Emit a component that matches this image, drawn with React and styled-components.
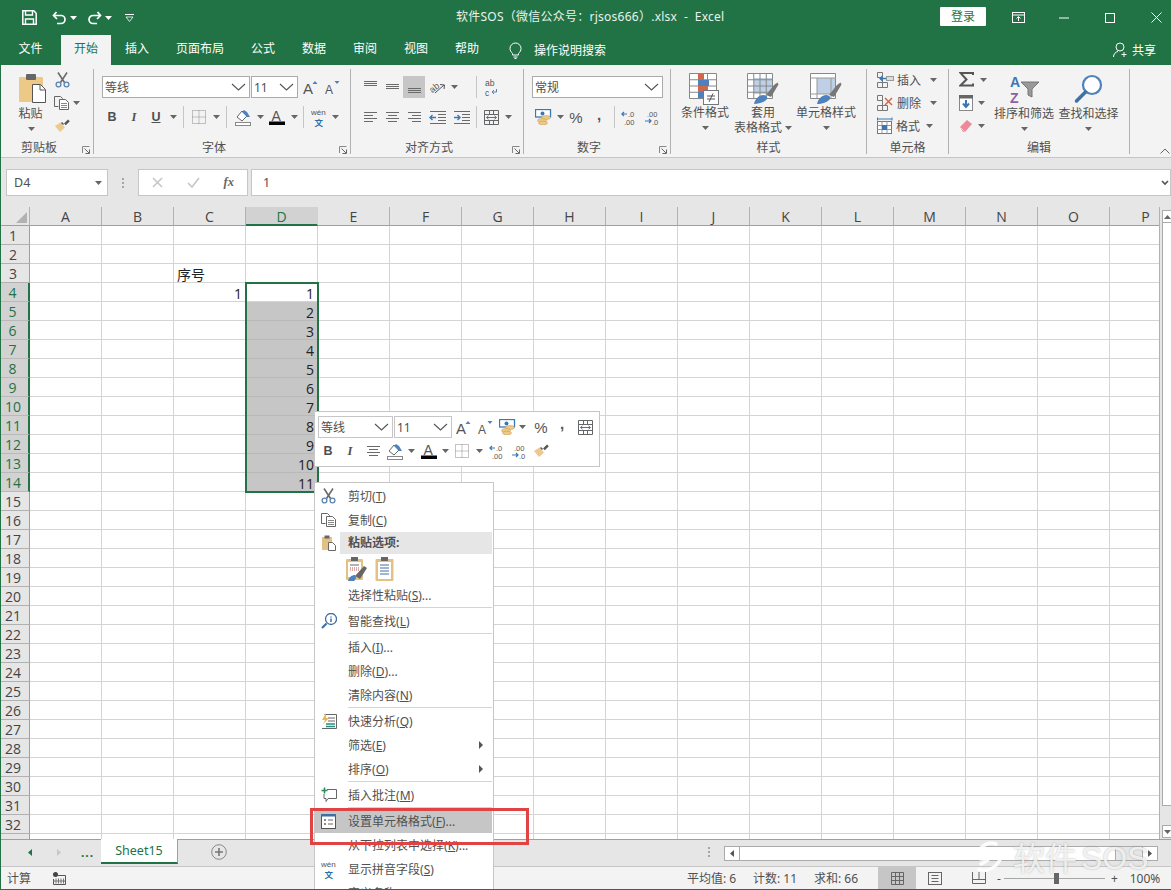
import React from 'react'
import styled, { createGlobalStyle } from 'styled-components'

const CJK = '"Noto Sans", "Noto Sans CJK SC", sans-serif'
const GREEN = '#217346'

const Global = createGlobalStyle`
  html, body { margin: 0; padding: 0; height: 100%; overflow: hidden; }
  body { font-family: ${CJK}; font-size: 12px; color: #505050; }
  * { box-sizing: border-box; }
`

const Window = styled.div`
  position: relative;
  width: 1171px;
  height: 890px;
  overflow: hidden;
  display: flex;
  flex-direction: column;
  background: #e6e6e6;
  border-left: 1px solid ${GREEN};
  border-bottom: 1px solid ${GREEN};
`

/* title bar */
const TitleBar = styled.div`
  height: 35px;
  margin-left: -1px;
  background: ${GREEN};
  display: flex;
  align-items: center;
  color: #fff;
  flex: none;
`
const Quick = styled.div`
  display: flex;
  align-items: center;
  width: 456px;
  flex: none;
  padding-left: 22px;
`
const QuickItem = styled.span`
  display: flex;
  align-items: center;
  width: ${p => p.$w}px;
`
const WinTitle = styled.div`
  width: 484px;
  flex: none;
  font-size: 12px;
  letter-spacing: .25px;
  padding-bottom: 3px;
  white-space: nowrap;
  color: #e9f2ed;
`
const Login = styled.div`
  width: 46px;
  height: 19px;
  flex: none;
  line-height: 19px;
  margin-top: -2px;
  background: #fff;
  border-radius: 1px;
  color: ${GREEN};
  text-align: center;
  font-size: 12px;
`
const WinButtons = styled.div`
  display: flex;
  align-items: center;
  flex: none;
  margin-left: 9px;
`
const WinBtn = styled.span`
  width: 46px;
  display: flex;
  justify-content: center;
  align-items: center;
`

/* tabs */
const TabBar = styled.div`
  height: 30px;
  margin-left: -1px;
  background: ${GREEN};
  display: flex;
  align-items: flex-end;
  flex: none;
  color: #fff;
`
const Tab = styled.div`
  width: ${p => p.$w}px;
  height: 30px;
  line-height: 27px;
  text-align: center;
  font-size: 12px;
  background: ${p => (p.$active ? '#f3f3f3' : 'transparent')};
  color: ${p => (p.$active ? GREEN : '#fff')};
`
const SearchTab = styled.div`
  display: flex;
  align-items: center;
  height: 30px;
  gap: 12px;
  margin-left: 16px;
`
const Share = styled.div`
  display: flex;
  align-items: center;
  height: 30px;
  gap: 4px;
  margin-left: auto;
  padding-right: 15px;
`

/* ribbon */
const Ribbon = styled.div`
  height: 93px;
  background: #f3f3f3;
  display: flex;
  flex: none;
  border-bottom: 1px solid #c6c6c6;
  padding-top: 4px;
  position: relative;
`
const Group = styled.section`
  width: ${p => p.$w}px;
  height: 85px;
  flex: none;
  display: flex;
  flex-direction: column;
  border-right: 1px solid #b1b1b1;
`
const GroupBody = styled.div`
  flex: 1;
  min-height: 0;
  display: flex;
  padding-left: ${p => p.$pl || 0}px;
`
const GroupRows = styled.div`
  flex: 1;
  min-height: 0;
  display: flex;
  flex-direction: column;
  gap: 8px;
  padding: 7px 0 0 ${p => p.$pl || 8}px;
`
const GroupFoot = styled.div`
  height: 14px;
  flex: none;
  display: flex;
  align-items: flex-end;
  font-size: 12px;
  color: #505050;
  line-height: 14px;
  margin-bottom: -1px;
`
const FootLabel = styled.span`
  flex: 1;
  text-align: center;
`
const Launcher = styled.span`
  width: 16px;
  flex: none;
  display: flex;
  justify-content: flex-end;
  padding: 0 3px 1px 0;
`
const Collapse = styled.div`
  position: absolute;
  right: 1px;
  bottom: 3px;
`
const Stack = styled.div`
  display: flex;
  flex-direction: column;
  width: ${p => (p.$w ? `${p.$w}px` : 'auto')};
  margin-top: ${p => p.$mt || 0}px;
  margin-left: ${p => p.$ml || 0}px;
  flex: none;
`
const Row = styled.div`
  display: flex;
  align-items: center;
  height: ${p => p.$h || 22}px;
  margin-left: ${p => p.$ml || 0}px;
  margin-top: ${p => p.$mt || 0}px;
`
const Tool = styled.span`
  width: ${p => p.$w || 22}px;
  height: ${p => p.$h || 22}px;
  flex: none;
  display: flex;
  align-items: center;
  justify-content: center;
  background: ${p => (p.$on ? '#c6c6c6' : 'transparent')};
`
const Sep = styled.span`
  width: 1px;
  height: 22px;
  flex: none;
  background: #c6c6c6;
  margin-left: ${p => p.$ml ?? 4}px;
  margin-right: ${p => p.$mr ?? 4}px;
`
const Combo = styled.div`
  width: ${p => p.$w}px;
  height: 22px;
  flex: none;
  background: #fff;
  border: 1px solid ${p => (p.$light ? '#c6c6c6' : '#ababab')};
  display: flex;
  align-items: center;
  justify-content: space-between;
  padding: 0 3px 0 2px;
  font-size: 12px;
  color: #505050;
  margin-right: 1px;
`
const BoldLetter = styled.span`
  font-family: ${p => (p.$i ? '"Liberation Serif", serif' : '"Liberation Sans", sans-serif')};
  font-weight: 700;
  font-size: 12.5px;
  color: #505050;
  font-style: ${p => (p.$i ? 'italic' : 'normal')};
  text-decoration: ${p => (p.$u ? 'underline' : 'none')};
`
const Glyph = styled.span`
  font-family: "Liberation Sans", sans-serif;
  font-size: 15px;
  line-height: 15px;
  font-weight: ${p => p.$b || 400};
  color: #555;
  margin-top: ${p => (p.$up ? -p.$up * 2 : 0)}px;
`
const BigBtn = styled.div`
  width: ${p => p.$w}px;
  flex: none;
  display: flex;
  flex-direction: column;
  align-items: center;
  font-size: 12px;
  line-height: 15px;
  color: #505050;
  padding-top: ${p => p.$pt ?? 4}px;
  white-space: nowrap;
`
const BigLabel = styled.div`
  margin-top: ${p => p.$mt ?? 0}px;
  margin-left: ${p => p.$ml ?? 0}px;
  text-align: center;
  height: 15px;
`
const CaretLine = styled.div`
  height: 15px;
  display: flex;
  align-items: center;
  justify-content: center;
  gap: 3px;
  margin-left: ${p => p.$ml ?? 0}px;
`
const CellRow = styled.div`
  display: flex;
  align-items: center;
  height: 23px;
  font-size: 12px;
  gap: ${p => p.$gap ?? 3}px;
`
const CellText = styled.span`
  width: ${p => p.$w}px;
`

/* formula bar */
const FormulaBar = styled.div`
  height: 49px;
  flex: none;
  display: flex;
  padding: 11px 0 11px 5px;
  background: #e6e6e6;
  align-items: stretch;
`
const FBox = styled.div`
  width: ${p => (p.$w ? `${p.$w}px` : 'auto')};
  flex: ${p => (p.$w ? 'none' : 1)};
  background: #fff;
  border: 1px solid #c6c6c6;
  display: flex;
  align-items: center;
  font-size: 12.5px;
  color: #505050;
  padding: 0 ${p => p.$pr || 6}px 0 ${p => p.$pl || 7}px;
  justify-content: ${p => p.$j || 'flex-start'};
  margin-right: ${p => p.$mr || 0}px;
`
const Fx = styled.span`
  font-family: "Liberation Serif", serif;
  font-style: italic;
  font-weight: 700;
  color: #666;
`
const Grip = styled.div`
  width: ${p => p.$w || 30}px;
  height: ${p => (p.$h ? `${p.$h}px` : 'auto')};
  margin-left: ${p => p.$ml || 0}px;
  flex: none;
  display: flex;
  flex-direction: column;
  align-items: center;
  justify-content: center;
  gap: 2px;
  span { width: 2px; height: 2px; background: #a6a6a6; }
`

/* sheet */
const SheetArea = styled.div`
  flex: none;
  height: 632px;
  display: flex;
  background: #e6e6e6;
`
const GridClip = styled.div`
  position: relative;
  width: 1159px;
  flex: none;
  overflow: hidden;
  background: #fff;
  border-right: 1px solid #b1b1b1;
`
const SheetGrid = styled.div`
  display: grid;
  grid-template-columns: 29px repeat(16, 72px);
  grid-auto-rows: 19px;
  width: 1181px;
  font-family: "Open Sans", "Noto Sans CJK SC", sans-serif;
`
const Corner = styled.div`
  height: 19px;
  background: #e6e6e6;
  border-right: 1px solid #b1b1b1;
  border-bottom: 1px solid #9f9f9f;
  display: flex;
  justify-content: flex-end;
  align-items: flex-end;
  padding: 0 2px 2px 0;
`
const ColHead = styled.div`
  height: 19px;
  background: ${p => (p.$on ? '#d2d2d2' : '#e6e6e6')};
  color: ${p => (p.$on ? GREEN : '#444')};
  border-right: 1px solid ${p => (p.$on ? '#d2d2d2' : '#b1b1b1')};
  border-bottom: ${p => (p.$on ? `2px solid ${GREEN}` : '1px solid #9f9f9f')};
  text-align: center;
  font-size: 14px;
  line-height: 20px;
`
const RowHead = styled.div`
  background: ${p => (p.$on ? '#d2d2d2' : '#e6e6e6')};
  color: ${p => (p.$on ? GREEN : '#444')};
  border-right: ${p => (p.$on ? `2px solid ${GREEN}` : '1px solid #9f9f9f')};
  border-bottom: 1px solid ${p => (p.$on ? '#b9b9b9' : '#b1b1b1')};
  text-align: center;
  font-size: 14px;
  line-height: 20px;
  padding-left: 4px;
  padding-right: 8px;
`
const Cell = styled.div`
  background: ${p => (p.$on ? '#c6c6c6' : '#fff')};
  border-right: 1px solid ${p => (p.$on ? '#c6c6c6' : '#d4d4d4')};
  border-bottom: 1px solid ${p => (p.$on ? '#b9b9b9' : '#d4d4d4')};
  color: #222;
  font-size: 14px;
  line-height: 21px;
  padding: 0 3px;
  text-align: ${p => (p.$left ? 'left' : 'right')};
  white-space: nowrap;
`
const Selection = styled.div`
  position: absolute;
  left: 244px;
  top: 75px;
  width: 74px;
  height: 211px;
  border: 2px solid ${GREEN};
  pointer-events: none;
`
const VScroll = styled.div`
  width: 10px;
  flex: none;
  margin-left: 2px;
  display: flex;
  flex-direction: column;
  padding-top: 3px;
  padding-bottom: 1px;
`
const VBtn = styled.div`
  height: 13px;
  background: #fff;
  border: 1px solid #ababab;
  display: flex;
  align-items: center;
  justify-content: center;
`
const VThumb = styled.div`
  height: 583px;
  background: #fff;
  border: 1px solid #ababab;
  border-top: 0;
`
const VGap = styled.div`
  flex: 1;
`

/* sheet tabs */
const TabStrip = styled.div`
  height: 28px;
  flex: none;
  background: #e6e6e6;
  border-top: 1px solid #9f9f9f;
  border-bottom: 1px solid #c6c6c6;
  display: flex;
  align-items: flex-start;
`
const Nav = styled.span`
  width: ${p => p.$w}px;
  height: 24px;
  flex: none;
  margin-left: ${p => p.$ml || 0}px;
  display: flex;
  align-items: center;
  justify-content: center;
  color: ${GREEN};
  font-weight: ${p => (p.$dots ? 700 : 400)};
  letter-spacing: ${p => (p.$dots ? '1px' : '0')};
`
const SheetTab = styled.div`
  width: 77px;
  height: 25px;
  margin-top: -1px;
  background: #fff;
  border-right: 1px solid #9f9f9f;
  border-bottom: 2px solid ${GREEN};
  color: ${GREEN};
  text-align: center;
  font-size: 12.5px;
  line-height: 23px;
  flex: none;
`
const HScroll = styled.div`
  width: 434px;
  height: 15px;
  margin-top: 6px;
  display: flex;
  border: 1px solid #ababab;
  background: #e6e6e6;
  flex: none;
`
const HBtn = styled.span`
  width: 15px;
  display: flex;
  align-items: center;
  justify-content: center;
  background: #fff;
  border-right: ${p => (p.$line ? '1px solid #ababab' : '0')};
  border-left: ${p => (p.$left ? '1px solid #ababab' : '0')};
`
const HThumb = styled.span`
  width: 376px;
  background: #fff;
  border-right: 1px solid #ababab;
`
const HGap = styled.span`
  flex: 1;
`

/* status bar */
const StatusBar = styled.div`
  flex: 1;
  background: #f3f3f3;
  display: flex;
  align-items: center;
  font-size: 12px;
  color: #505050;
`
const StatusItem = styled.span`
  width: ${p => p.$w}px;
  flex: none;
  padding-left: ${p => p.$pl || 0}px;
  white-space: nowrap;
`
const ViewBtn = styled.span`
  width: ${p => p.$w}px;
  height: 22px;
  flex: none;
  display: flex;
  align-items: center;
  justify-content: center;
  background: ${p => (p.$on ? '#c6c6c6' : 'transparent')};
`
const Zoom = styled.div`
  display: flex;
  align-items: center;
  width: 170px;
  flex: none;
  margin-left: -7px;
  color: #505050;
`
const ZoomTrack = styled.div`
  position: relative;
  width: 101px;
  height: 1px;
  background: #a6a6a6;
  margin: 0 6px 0 3px;
`
const ZoomThumb = styled.span`
  position: absolute;
  left: 50px;
  top: -5px;
  width: 5px;
  height: 11px;
  background: #666;
`
const ZoomValue = styled.span`
  margin-left: 12px;
`

/* floating stuff */
const MiniBar = styled.div`
  position: absolute;
  left: 313px;
  top: 411px;
  width: 286px;
  height: 56px;
  background: #fff;
  border: 1px solid #c6c6c6;
  padding: 0 3px;
  display: flex;
  flex-direction: column;
  justify-content: flex-start;
  z-index: 3;
`
const Menu = styled.div`
  position: absolute;
  left: 313px;
  top: 482px;
  width: 180px;
  height: 430px;
  background: #fff;
  border: 1px solid #c6c6c6;
  padding: 1px 0 0 0;
  z-index: 3;
`
const MenuRow = styled.div`
  height: 24px;
  display: flex;
  align-items: center;
  font-size: 12px;
  color: #505050;
  margin-right: 1px;
  background: ${p => (p.$hl ? '#c6c6c6' : 'transparent')};
  u { text-underline-offset: 1px; }
`
const MenuIcon = styled.span`
  width: 33px;
  height: ${p => p.$h || 24}px;
  flex: none;
  display: flex;
  align-items: center;
  justify-content: center;
  padding-right: 6px;
`
const MenuHead = styled.div`
  display: flex;
  align-items: center;
  height: 22px;
  font-size: 12px;
  font-weight: 700;
  color: #505050;
`
const MenuHeadText = styled.span`
  flex: 1;
  height: 22px;
  line-height: 21px;
  background: #e6e6e6;
  margin: 0 1px 0 -8px;
  padding-left: 8px;
`
const PasteRow = styled.div`
  height: 29px;
  display: flex;
  gap: 8px;
  padding-left: 30px;
  align-items: center;
`
const MenuSep = styled.div`
  height: 1px;
  margin: 0 1px 1px 33px;
  background: #d4d4d4;
`
const SubArrow = styled.span`
  margin-left: auto;
  margin-right: 9px;
  width: 0;
  height: 0;
  border-left: 4px solid #555;
  border-top: 4px solid transparent;
  border-bottom: 4px solid transparent;
`
const RedBox = styled.div`
  position: absolute;
  left: 309px;
  top: 808px;
  width: 219px;
  height: 37px;
  border: 3px solid #e04343;
  z-index: 4;
`
const Watermark = styled.div`
  position: absolute;
  left: 974px;
  top: 836px;
  display: flex;
  align-items: center;
  gap: 4px;
  font-size: 32px;
  line-height: 44px;
  color: rgba(255, 255, 255, .8);
  text-shadow: 0 0 2px rgba(120, 120, 120, .55);
  z-index: 5;
  pointer-events: none;
`
const WaterSwirl = styled.span`
  margin-right: 6px;
`
const WaterLatin = styled.span`
  font-family: "Liberation Sans", sans-serif;
`

/* icons */
const Svg = ({ w = 16, h = 16, pad = 0, children }) => (
  <svg width={w} height={h + pad * 2} viewBox={`0 ${-pad} ${w} ${h + pad * 2}`} fill="none" style={{ display: 'block', flex: 'none' }}>{children}</svg>
)
const Caret = ({ c = '#666' }) => <Svg w={7} h={4}><path d="M0 0h7L3.5 4z" fill={c} /></Svg>
const Chevron = () => <Svg w={15} h={8}><path d="M1 1l6.5 6L14 1" stroke="#555" strokeWidth="1.1" /></Svg>
const SaveIcon = () => <Svg w={15} h={15}><path d="M.8.8h11l2.4 2.4v11H.8z" stroke="#fff" strokeWidth="1.5" /><path d="M3.5 1v4h7V1M3.5 14V9h8v5" stroke="#fff" strokeWidth="1.4" /></Svg>
const UndoIcon = () => <Svg w={15} h={14}><path d="M4.5 1L1.5 4.5 5 8M2 4.5h7a4 4 0 0 1 0 8H5" stroke="#fff" strokeWidth="1.7" /></Svg>
const RedoIcon = () => <Svg w={15} h={14}><path d="M10.5 1l3 3.5L10 8M13 4.5H6a4 4 0 0 0 0 8h4" stroke="#fff" strokeWidth="1.7" /></Svg>
const QuickMore = () => <Svg w={9} h={8}><path d="M0 .5h9" stroke="#fff" /><path d="M1 3h7L4.5 7.5z" stroke="#fff" strokeWidth=".8" /></Svg>
const RibbonOpt = () => <Svg w={13} h={11}><rect x=".5" y=".5" width="12" height="10" stroke="#fff" /><path d="M1 3h11" stroke="#fff" /><path d="M6.5 9V5M4.5 6.5l2-2 2 2" stroke="#fff" /></Svg>
const MinIcon = () => <Svg w={10} h={2}><path d="M0 1h10" stroke="#fff" /></Svg>
const MaxIcon = () => <Svg w={10} h={10}><rect x=".5" y=".5" width="9" height="9" stroke="#fff" /></Svg>
const CloseIcon = () => <Svg w={11} h={11}><path d="M.5.5l10 10M10.5.5l-10 10" stroke="#fff" /></Svg>
const Bulb = () => <Svg w={13} h={17}><path d="M3.5 11.5C2 10 1 8.5 1 6.5a5.5 5.5 0 0 1 11 0c0 2-1 3.5-2.5 5V13h-6z" stroke="#fff" /><path d="M4.5 15h4M5.5 16.5h2" stroke="#fff" /></Svg>
const Person = () => <Svg w={15} h={16}><circle cx="7" cy="5" r="4" stroke="#fff" /><path d="M.5 15c0-3 2-5 4.5-5.5M11 10v5M8.5 12.5h5" stroke="#fff" /></Svg>
const ScissorsIcon = () => <Svg w={15} h={16}><path d="M3 .5l6.5 10M12 .5L5.5 10.5" stroke="#6b6b6b" strokeWidth="1.6" /><circle cx="3.5" cy="12.5" r="2.4" stroke="#5b84b1" strokeWidth="1.3" /><circle cx="11.5" cy="12.5" r="2.4" stroke="#5b84b1" strokeWidth="1.3" /></Svg>
const CopyIcon = () => <Svg w={16} h={14}><path d="M.5.5h6l2 2V3M.5.5v10h4" stroke="#666" /><path d="M5.5 3.5h6l3 3v7h-9z" fill="#fff" stroke="#666" /><path d="M7 7.5h6M7 9.5h6M7 11.5h6" stroke="#888" /></Svg>
const BrushIcon = () => <Svg w={17} h={16}><path d="M1 8l5 6 5-4.5L6.5 4.5z" fill="#eec98a" /><path d="M9 7l-2-2 1-1 2 2zM10 5.5l4-4 1.8 1.8-4 4-2-2z" fill="#555" /></Svg>
const PasteBig = () => <Svg w={29} h={31}><rect x="1" y="4" width="24" height="25" rx="1" fill="#edc987" /><rect x="8" y="1" width="10" height="6" rx="1" fill="#666" /><path d="M14.5 11.5h8l5 5v13h-13z" fill="#fff" stroke="#555" /><path d="M22 12v5h5" stroke="#555" /></Svg>
const Launch = () => <Svg w={8} h={8}><path d="M.5 7V.5H7.5" stroke="#888" /><path d="M2.5 2.5l4.5 4.5M7.5 3.5v4h-4" stroke="#666" /></Svg>
const GrowA = ({ down }) => (
  <Svg w={15} h={15} pad={4}>
    <text x="0" y="14" fontFamily="Liberation Sans" fontSize={down ? 12 : 15} fill="#555">A</text>
    <path d={down ? 'M9.5 1h5L12 4z' : 'M9.5 4h5L12 1z'} fill="#4f81bd" />
  </Svg>
)
const BorderIcon = () => <Svg w={14} h={14}><path d="M.5.5h13v13h-13zM7 .5v13M.5 7h13" stroke="#8a8a8a" strokeDasharray="1 1" /></Svg>
const FillIcon = () => (
  <Svg w={17} h={17}>
    <path d="M2 8l5-6 5 5-5 5z" fill="#fff" stroke="#666" />
    <path d="M7 3l5 5h3l-3-5-3-2z" fill="#4f81bd" />
    <rect x=".5" y="13.5" width="15" height="3" fill="#fff" stroke="#888" />
  </Svg>
)
const ColorA = () => (
  <Svg w={16} h={16} pad={4}>
    <text x="2.5" y="12" fontFamily="Liberation Sans" fontSize="14" fill="#555">A</text>
    <rect x="0" y="12.5" width="16" height="3.5" fill="#000" />
  </Svg>
)
const WenIcon = () => (
  <Svg w={16} h={17} pad={4}>
    <text x="0" y="5.5" fontFamily="Liberation Sans" fontSize="8" fill="#555">wén</text>
    <text x="3.5" y="17" fontFamily="Noto Sans CJK SC" fontSize="8.5" fontWeight="700" fill="#2f6ea8">文</text>
  </Svg>
)
const Lines = ({ rows, w = 15 }) => (
  <Svg w={w} h={14}>
    {rows.map(([x, y, l], i) => <path key={i} d={`M${x} ${y + .5}h${l}`} stroke="#6a6a6a" />)}
  </Svg>
)
const TopLines = [[1, 1, 13], [1, 3, 13], [1, 5, 13]]
const MidLines = [[1, 4, 13], [1, 6, 13], [1, 8, 13]]
const BotLines = [[1, 8, 13], [1, 10, 13], [1, 12, 13]]
const LeftLines = [[1, 2, 13], [1, 5, 9], [1, 8, 13], [1, 11, 9]]
const CenterLines = [[1, 2, 13], [3, 5, 9], [1, 8, 13], [3, 11, 9]]
const RightLines = [[1, 2, 13], [5, 5, 9], [1, 8, 13], [5, 11, 9]]
const Orient = () => (
  <Svg w={17} h={16} pad={6}>
    <text x="0" y="11" fontFamily="Liberation Sans" fontSize="9" fill="#555" transform="rotate(-40 6 8)">ab</text>
    <path d="M6 14L15 6M11 5.5l4.5.5-.5 4" stroke="#555" />
  </Svg>
)
const WrapIcon = () => (
  <Svg w={14} h={17} pad={4}>
    <text x="1" y="7" fontFamily="Liberation Sans" fontSize="8.5" fill="#555">ab</text>
    <text x="1" y="16.5" fontFamily="Liberation Sans" fontSize="8.5" fill="#555">c</text>
    <path d="M12.5 10v3H8M10 11l-2 2 2 2" stroke="#4f81bd" />
  </Svg>
)
const Indent = ({ inc }) => (
  <Svg w={17} h={13}>
    <path d="M9 3.5h8M9 6.5h8M9 9.5h8M1 12.5h16M1 .5h16" stroke="#6a6a6a" />
    <path d={inc ? 'M1 6.5h6M4.5 4l2.5 2.5L4.5 9' : 'M7 6.5H1M3.5 4L1 6.5 3.5 9'} stroke="#3a78b5" strokeWidth="1.4" />
  </Svg>
)
const MergeIcon = () => (
  <Svg w={15} h={15}>
    <path d="M.5.5h14v14H.5zM.5 4.5h14M.5 10.5h14M5.5.5v4M9.5.5v4M5.5 10.5v4M9.5 10.5v4" stroke="#666" />
    <path d="M2.5 7.5h10M4.5 5.8l-2 1.7 2 1.7M10.5 5.8l2 1.7-2 1.7" stroke="#3a78b5" />
  </Svg>
)
const Currency = () => (
  <Svg w={17} h={16}>
    <rect x=".5" y=".5" width="15" height="7.5" fill="#fff" stroke="#3a78b5" strokeWidth="1.3" />
    <circle cx="7.5" cy="4.5" r="2" fill="#3a78b5" />
    <ellipse cx="11" cy="8.5" rx="4.5" ry="2" fill="#edc987" stroke="#c9a25a" strokeWidth=".6" />
    <ellipse cx="7" cy="11.5" rx="4.5" ry="2" fill="#edc987" stroke="#c9a25a" strokeWidth=".6" />
    <ellipse cx="8" cy="14" rx="4.5" ry="1.8" fill="#edc987" stroke="#c9a25a" strokeWidth=".6" />
  </Svg>
)
const Decimals = ({ inc }) => (
  <Svg w={16} h={15} pad={4}>
    {inc ? (
      <>
        <text x="7" y="6.5" fontFamily="Liberation Sans" fontSize="7.5" fill="#555">.0</text>
        <text x="3" y="14.5" fontFamily="Liberation Sans" fontSize="7.5" fill="#555">.00</text>
        <path d="M6 4H.8M3 2L.8 4 3 6" stroke="#3a78b5" strokeWidth="1.2" />
      </>
    ) : (
      <>
        <text x="3" y="6.5" fontFamily="Liberation Sans" fontSize="7.5" fill="#555">.00</text>
        <text x="8" y="14.5" fontFamily="Liberation Sans" fontSize="7.5" fill="#555">.0</text>
        <path d="M1 11h6M5 9l2 2-2 2" stroke="#3a78b5" strokeWidth="1.2" />
      </>
    )}
  </Svg>
)
const GridLines = ({ x, y, w, h, cols, rows }) => {
  const v = Array.from({ length: cols + 1 }, (_, i) => `M${x + (i * w) / cols} ${y}v${h}`)
  const z = Array.from({ length: rows + 1 }, (_, i) => `M${x} ${y + (i * h) / rows}h${w}`)
  return <path d={[...v, ...z].join('')} stroke="#888" />
}
const CondIcon = () => (
  <Svg w={32} h={32}>
    <rect x=".5" y=".5" width="27" height="25" fill="#fff" />
    <GridLines x={.5} y={.5} w={27} h={25} cols={3} rows={4} />
    <rect x="9" y="1" width="6" height="6" fill="#d0674a" />
    <rect x="9" y="7" width="11" height="6" fill="#4f81bd" />
    <rect x="9" y="13" width="9" height="6" fill="#d0674a" />
    <rect x="9" y="19" width="5" height="6" fill="#4f81bd" />
    <rect x="14.5" y="17.5" width="15" height="14" fill="#fff" stroke="#777" />
    <path d="M18 23h8M18 26h8M24 20.5l-4 8.5" stroke="#555" />
  </Svg>
)
const TableIcon = ({ head }) => (
  <Svg w={32} h={32}>
    <rect x=".5" y=".5" width="25" height="25" fill="#fff" />
    <rect x="7" y="5" width="18" height="16" fill="#bdd0e6" />
    <GridLines x={.5} y={.5} w={25} h={25} cols={head ? 1 : 4} rows={head ? 1 : 4} />
    {head && <path d="M.5 5h25M.5 21h25M7 5v20M21 5v20" stroke="#999" />}
    <path d="M19 22l8-10 3.5-2.5 1 2L24 24z" fill="#777" />
    <path d="M7 31c1-5 5-9 9-9 4 0 5 3 4 4-2 3-8 5-13 5z" fill="#4f81bd" />
  </Svg>
)
const CellInsertIcon = () => (
  <Svg w={17} h={16}>
    <path d="M.5.5h5v5h-5zM.5 10.5h5v5h-5zM5.5 10.5h5v5h-5z" stroke="#777" />
    <path d="M.5 5.5h5v5" stroke="#777" />
    <rect x="9.5" y="4.5" width="7" height="4" fill="#ddd" stroke="#999" />
    <path d="M9 6.5H3M5.5 4L3 6.5 5.5 9" stroke="#3a78b5" strokeWidth="1.3" />
  </Svg>
)
const CellDeleteIcon = () => (
  <Svg w={17} h={16}>
    <path d="M.5.5h5v5h-5zM.5 10.5h5v5h-5zM5.5 10.5h5v5h-5zM.5 5.5h5v5" stroke="#777" />
    <path d="M8 3l7 7M15 3l-7 7" stroke="#d0674a" strokeWidth="1.5" />
  </Svg>
)
const CellFormatIcon = () => (
  <Svg w={16} h={17}>
    <path d="M.5 .5v3M15 .5v3M1 2h14" stroke="#3a78b5" />
    <rect x=".5" y="4.5" width="14" height="12" fill="#fff" stroke="#777" />
    <path d="M5 4.5v12M10 4.5v12M.5 8.5h14M.5 12.5h14" stroke="#999" />
    <rect x="5" y="8" width="5" height="5" fill="#3a78b5" />
  </Svg>
)
const SigmaIcon = () => <Svg w={15} h={15}><path d="M14 3V1H1.5l6 6.5-6 6H14v-2" stroke="#555" strokeWidth="2" /></Svg>
const FillDownIcon = () => (
  <Svg w={14} h={16}>
    <rect x=".5" y=".5" width="13" height="15" fill="#fff" stroke="#888" />
    <rect x="0" y="0" width="14" height="3.5" fill="#666" />
    <path d="M7 5v7M4 8.5L7 12l3-3.5" stroke="#3a78b5" strokeWidth="2" />
  </Svg>
)
const EraserIcon = () => <Svg w={14} h={14}><path d="M1 8l7-7 5 4-7 8H4z" fill="#ec8a9a" /><path d="M1.5 8.5l4.5 4.5" stroke="#f7c6ce" /></Svg>
const SortIcon = () => (
  <Svg w={32} h={30} pad={4}>
    <text x="2" y="13" fontFamily="Liberation Sans" fontWeight="700" fontSize="14" fill="#3a78b5">A</text>
    <text x="2" y="29" fontFamily="Liberation Sans" fontWeight="700" fontSize="14" fill="#8e5fa8">Z</text>
    <path d="M13 8h18l-7 7v8l-4-2v-6z" fill="#999" stroke="#777" />
  </Svg>
)
const FindIcon = () => (
  <Svg w={30} h={30}>
    <circle cx="18" cy="11" r="9" fill="#fff" stroke="#4f81bd" strokeWidth="2.2" />
    <path d="M11.5 18L2.5 27" stroke="#3f6fa3" strokeWidth="3.5" strokeLinecap="round" />
  </Svg>
)
const PasteSmall = () => <Svg w={16} h={16}><rect x="1" y="2" width="10" height="13" fill="#e3c185" /><rect x="3.5" y=".5" width="5" height="3" fill="#666" /><path d="M7.5 7.5h4l3 3v5h-7z" fill="#fff" stroke="#666" /></Svg>
const PasteFormat = () => (
  <Svg w={22} h={24}>
    <rect x="1" y="2" width="17" height="21" rx="1" fill="#e3c185" />
    <rect x="6" y="0" width="7" height="4" fill="#666" />
    <rect x="3" y="5" width="13" height="15" fill="#fff" />
    <path d="M5 8h9" stroke="#666" /><path d="M5 11h9M5 13h9" stroke="#c0504d" strokeDasharray="1 1" />
    <path d="M10 19l9-10 3 2-7 11z" fill="#666" /><path d="M3 24c1-4 4-6 7-6 2 2 1 4-1 6z" fill="#4f81bd" />
  </Svg>
)
const PasteValues = () => (
  <Svg w={19} h={24}>
    <rect x=".5" y="2" width="18" height="22" rx="1" fill="#e3c185" />
    <rect x="6" y="0" width="7" height="4" fill="#666" />
    <rect x="3" y="5" width="13" height="17" fill="#fff" />
    <path d="M5 8h9M5 11h9M5 14h9M5 17h9" stroke="#3f6fa3" />
  </Svg>
)
const SmartIcon = () => (
  <Svg w={16} h={16}>
    <circle cx="10" cy="6" r="5.5" stroke="#3f6fa3" strokeWidth="1.3" />
    <path d="M5.5 10.5l-4.5 4.5" stroke="#3f6fa3" strokeWidth="2.2" />
    <path d="M10 3.5v1M10 5.5v3.5" stroke="#3f6fa3" strokeWidth="1.5" />
  </Svg>
)
const QuickIcon = () => (
  <Svg w={16} h={16}>
    <path d="M3.5 1.5h12v14H1" stroke="#666" />
    <path d="M5 0L1 7h3L2 11l6-6H5z" fill="#eeb44e" />
    <path d="M7 5h7M7 8h7" stroke="#666" /><path d="M5 11h9M5 13.5h9" stroke="#2e8b7f" strokeWidth="1.4" />
  </Svg>
)
const CommentIcon = () => (
  <Svg w={16} h={16}>
    <path d="M6 2.5h9.5v9H7l-2 3v-3H3V7" stroke="#666" />
    <path d="M.5 3.5h6M3.5 .5v6" stroke="#2e8b57" strokeWidth="1.6" />
  </Svg>
)
const FormatIcon = () => (
  <Svg w={16} h={15}>
    <rect x=".5" y=".5" width="14" height="14" fill="#fff" stroke="#555" />
    <rect x="0" y="0" width="15" height="2.5" fill="#3f6fa3" />
    <path d="M3 6h2M3 10h2" stroke="#666" strokeWidth="1.5" /><path d="M7 6h5M7 10h5" stroke="#666" />
  </Svg>
)
const MacroIcon = () => (
  <Svg w={13} h={13}>
    <path d="M5 3.5h7.5v9H.5V7" stroke="#555" />
    <path d="M3 6.5v5M5.5 6.5v5M8 6.5v5M10.5 6.5v5M.5 9h12" stroke="#777" />
    <circle cx="2.5" cy="2.5" r="2.5" fill="#444" />
  </Svg>
)
const NormalView = () => <Svg w={13} h={13}><path d="M.5.5h12v12H.5zM4.5.5v12M8.5.5v12M.5 4.5h12M.5 8.500h12" stroke="#666" /></Svg>
const PageView = () => <Svg w={14} h={13}><rect x=".5" y=".5" width="13" height="12" stroke="#666" /><path d="M3.5 3.5h7M3.5 6.5h7M3.5 9.5h7" stroke="#666" /></Svg>
const BreakView = () => <Svg w={14} h={12}><path d="M.5 0v11.500h13V0M.5 7.500h13M7 0v7.500" stroke="#666" /></Svg>
const Swirl = () => (
  <Svg w={28} h={34}>
    <path d="M21 3C13 0 5 5 3 13c-1 5 4 6 8 4 5-2 8-5 8-5-4 5-7 9-13 11M26 10c2 8-5 17-14 19-4 1-6 0-8-1" stroke="rgba(255,255,255,.85)" strokeWidth="3.5" strokeLinecap="round" />
  </Svg>
)

const COLS = 'ABCDEFGHIJKLMNOP'.split('')

function Sheet() {
  const rows = []
  for (let r = 1; r <= 33; r++) {
    const on = r >= 4 && r <= 14
    // row 33 is only a sliver above the tab strip, its number does not show
    rows.push(<RowHead key={`h${r}`} $on={on}>{r < 33 ? r : ''}</RowHead>)
    COLS.forEach(c => {
      let text = ''
      if (c === 'C' && r === 3) text = '序号'
      if (c === 'C' && r === 4) text = '1'
      if (c === 'D' && on) text = String(r - 3)
      rows.push(
        <Cell key={c + r} $on={c === 'D' && r >= 5 && r <= 14} $left={r === 3}>{text}</Cell>
      )
    })
  }
  return (
    <SheetGrid>
      <Corner><Svg w={11} h={11}><path d="M11 0v11H0z" fill="#b1b1b1" /></Svg></Corner>
      {COLS.map(c => <ColHead key={c} $on={c === 'D'}>{c}</ColHead>)}
      {rows}
    </SheetGrid>
  )
}

function ClipboardGroup() {
  return (
    <Group $w={93}>
      <GroupBody $pl={16}>
        <BigBtn $w={30} $pt={4}>
          <PasteBig />
          <BigLabel $mt={2} $ml={-3}>粘贴</BigLabel>
          <CaretLine $ml={-1}><Caret /></CaretLine>
        </BigBtn>
        <Stack $mt={-1} $ml={4}>
          <Row $h={23}><Tool><ScissorsIcon /></Tool></Row>
          <Row $h={23}><Tool><CopyIcon /></Tool><Caret /></Row>
          <Row $h={23}><Tool><BrushIcon /></Tool></Row>
        </Stack>
      </GroupBody>
      <GroupFoot>
        <FootLabel>剪贴板</FootLabel>
        <Launcher><Launch /></Launcher>
      </GroupFoot>
    </Group>
  )
}

function FontGroup() {
  return (
    <Group $w={257}>
      <GroupRows $pl={8}>
        <Row>
          <Combo $w={148}>等线<Chevron /></Combo>
          <Combo $w={47}>11<Chevron /></Combo>
          <Tool><GrowA /></Tool>
          <Tool><GrowA down /></Tool>
        </Row>
        <Row $ml={-1}>
          <Tool><BoldLetter>B</BoldLetter></Tool>
          <Tool><BoldLetter $i>I</BoldLetter></Tool>
          <Tool><BoldLetter $u>U</BoldLetter></Tool>
          <Tool $w={12}><Caret /></Tool>
          <Sep />
          <Tool><BorderIcon /></Tool>
          <Tool $w={12}><Caret /></Tool>
          <Sep />
          <Tool $w={24}><FillIcon /></Tool>
          <Tool $w={10}><Caret /></Tool>
          <Tool $w={24}><ColorA /></Tool>
          <Tool $w={10}><Caret /></Tool>
          <Sep />
          <Tool><WenIcon /></Tool>
          <Tool $w={10}><Caret /></Tool>
        </Row>
      </GroupRows>
      <GroupFoot>
        <FootLabel>字体</FootLabel>
        <Launcher><Launch /></Launcher>
      </GroupFoot>
    </Group>
  )
}

function AlignGroup() {
  return (
    <Group $w={173}>
      <GroupRows $pl={8}>
        <Row>
          <Tool><Lines rows={TopLines} /></Tool>
          <Tool><Lines rows={MidLines} /></Tool>
          <Tool $on><Lines rows={BotLines} /></Tool>
          <Tool $w={24}><Orient /></Tool>
          <Tool $w={10}><Caret /></Tool>
          <Sep $ml={17} $mr={1} />
          <Tool $w={26}><WrapIcon /></Tool>
        </Row>
        <Row>
          <Tool><Lines rows={LeftLines} /></Tool>
          <Tool><Lines rows={CenterLines} /></Tool>
          <Tool><Lines rows={RightLines} /></Tool>
          <Tool $w={25}><Indent /></Tool>
          <Tool><Indent inc /></Tool>
          <Sep $ml={4} $mr={3} />
          <Tool><MergeIcon /></Tool>
          <Tool $w={12}><Caret /></Tool>
        </Row>
      </GroupRows>
      <GroupFoot>
        <FootLabel>对齐方式</FootLabel>
        <Launcher><Launch /></Launcher>
      </GroupFoot>
    </Group>
  )
}

function NumberGroup() {
  return (
    <Group $w={147}>
      <GroupRows $pl={8}>
        <Row><Combo $w={131}>常规<Chevron /></Combo></Row>
        <Row>
          <Tool $w={23}><Currency /></Tool>
          <Tool $w={10}><Caret /></Tool>
          <Tool $w={22}><Glyph>%</Glyph></Tool>
          <Tool $w={24}><Glyph $b={700} $up={3}>,</Glyph></Tool>
          <Sep $ml={3} $mr={2} />
          <Tool $w={24}><Decimals inc /></Tool>
          <Tool><Decimals /></Tool>
        </Row>
      </GroupRows>
      <GroupFoot>
        <FootLabel>数字</FootLabel>
        <Launcher><Launch /></Launcher>
      </GroupFoot>
    </Group>
  )
}

function StylesGroup() {
  return (
    <Group $w={196}>
      <GroupBody $pl={2}>
        <BigBtn $w={64}>
          <CondIcon />
          <BigLabel>条件格式</BigLabel>
          <CaretLine><Caret /></CaretLine>
        </BigBtn>
        <BigBtn $w={52}>
          <TableIcon />
          <BigLabel>套用</BigLabel>
          <CaretLine>表格格式<Caret /></CaretLine>
        </BigBtn>
        <BigBtn $w={74}>
          <TableIcon head />
          <BigLabel>单元格样式</BigLabel>
          <CaretLine><Caret /></CaretLine>
        </BigBtn>
      </GroupBody>
      <GroupFoot><FootLabel>样式</FootLabel></GroupFoot>
    </Group>
  )
}

function CellsGroup() {
  return (
    <Group $w={82}>
      <GroupBody $pl={10}>
        <Stack $mt={-1}>
          <CellRow><CellInsertIcon /><CellText $w={30}>插入</CellText><Caret /></CellRow>
          <CellRow><CellDeleteIcon /><CellText $w={30}>删除</CellText><Caret /></CellRow>
          <CellRow><CellFormatIcon /><CellText $w={27}>格式</CellText><Caret /></CellRow>
        </Stack>
      </GroupBody>
      <GroupFoot><FootLabel>单元格</FootLabel></GroupFoot>
    </Group>
  )
}

function EditGroup() {
  return (
    <Group $w={181}>
      <GroupBody $pl={10}>
        <Stack $w={33} $mt={-1}>
          <CellRow $gap={6}><SigmaIcon /><Caret /></CellRow>
          <CellRow $gap={5}><FillDownIcon /><Caret /></CellRow>
          <CellRow $gap={5}><EraserIcon /><Caret /></CellRow>
        </Stack>
        <BigBtn $w={64} $pt={1}>
          <SortIcon />
          <BigLabel $mt={-2}>排序和筛选</BigLabel>
          <CaretLine><Caret /></CaretLine>
        </BigBtn>
        <BigBtn $w={65} $pt={5}>
          <FindIcon />
          <BigLabel $mt={2}>查找和选择</BigLabel>
          <CaretLine><Caret /></CaretLine>
        </BigBtn>
      </GroupBody>
      <GroupFoot><FootLabel>编辑</FootLabel></GroupFoot>
    </Group>
  )
}

function MiniToolbar() {
  return (
    <MiniBar>
      <Row $h={24} $mt={3}>
        <Combo $w={75} $light>等线<Chevron /></Combo>
        <Combo $w={58} $light>11<Chevron /></Combo>
        <Tool $w={20}><GrowA /></Tool>
        <Tool $w={24}><GrowA down /></Tool>
        <Tool $w={20}><Currency /></Tool>
        <Tool $w={11}><Caret /></Tool>
        <Tool $w={26}><Glyph>%</Glyph></Tool>
        <Tool $w={16}><Glyph $b={700} $up={4}>,</Glyph></Tool>
        <Tool $w={30}><MergeIcon /></Tool>
      </Row>
      <Row $h={24}>
        <Tool $w={20}><BoldLetter>B</BoldLetter></Tool>
        <Tool $w={24}><BoldLetter $i>I</BoldLetter></Tool>
        <Tool><Lines rows={CenterLines} /></Tool>
        <Tool><FillIcon /></Tool>
        <Tool $w={10}><Caret /></Tool>
        <Tool $w={26}><ColorA /></Tool>
        <Tool $w={7}><Caret /></Tool>
        <Tool $w={26}><BorderIcon /></Tool>
        <Tool $w={8}><Caret /></Tool>
        <Tool $w={28}><Decimals inc /></Tool>
        <Tool $w={16}><Decimals /></Tool>
        <Tool $w={28}><BrushIcon /></Tool>
      </Row>
    </MiniBar>
  )
}

function ContextMenu() {
  const item = (icon, text, key, after = '', extra) => (
    <MenuRow $hl={extra === 'hl'}>
      <MenuIcon>{icon}</MenuIcon>
      <span>{text}(<u>{key}</u>){after}</span>
      {extra === 'sub' && <SubArrow />}
    </MenuRow>
  )
  return (
    <Menu>
      {item(<ScissorsIcon />, '剪切', 'T')}
      {item(<CopyIcon />, '复制', 'C')}
      <MenuHead>
        <MenuIcon $h={22}><PasteSmall /></MenuIcon>
        <MenuHeadText>粘贴选项:</MenuHeadText>
      </MenuHead>
      <PasteRow><PasteFormat /><PasteValues /></PasteRow>
      {item(null, '选择性粘贴', 'S', '...')}
      <MenuSep />
      {item(<SmartIcon />, '智能查找', 'L')}
      <MenuSep />
      {item(null, '插入', 'I', '...')}
      {item(null, '删除', 'D', '...')}
      {item(null, '清除内容', 'N')}
      <MenuSep />
      {item(<QuickIcon />, '快速分析', 'Q')}
      {item(null, '筛选', 'E', '', 'sub')}
      {item(null, '排序', 'O', '', 'sub')}
      <MenuSep />
      {item(<CommentIcon />, '插入批注', 'M')}
      <MenuSep />
      {item(<FormatIcon />, '设置单元格格式', 'F', '...', 'hl')}
      {item(null, '从下拉列表中选择', 'K', '...')}
      {item(<WenIcon />, '显示拼音字段', 'S')}
      {item(null, '定义名称', 'A', '...')}
    </Menu>
  )
}

export default function App() {
  return (
    <Window>
      <Global />
      <TitleBar>
        <Quick>
          <QuickItem $w={30}><SaveIcon /></QuickItem>
          <QuickItem $w={18}><UndoIcon /></QuickItem>
          <QuickItem $w={17}><Caret c="#fff" /></QuickItem>
          <QuickItem $w={18}><RedoIcon /></QuickItem>
          <QuickItem $w={20}><Caret c="#fff" /></QuickItem>
          <QuickItem $w={12}><QuickMore /></QuickItem>
        </Quick>
        <WinTitle>软件SOS（微信公众号：rjsos666）.xlsx&nbsp; -&nbsp; Excel</WinTitle>
        <Login>登录</Login>
        <WinButtons>
          <WinBtn><RibbonOpt /></WinBtn>
          <WinBtn><MinIcon /></WinBtn>
          <WinBtn><MaxIcon /></WinBtn>
          <WinBtn><CloseIcon /></WinBtn>
        </WinButtons>
      </TitleBar>
      <TabBar>
        <Tab $w={61}>文件</Tab>
        <Tab $w={50} $active>开始</Tab>
        <Tab $w={52}>插入</Tab>
        <Tab $w={74}>页面布局</Tab>
        <Tab $w={52}>公式</Tab>
        <Tab $w={50}>数据</Tab>
        <Tab $w={52}>审阅</Tab>
        <Tab $w={50}>视图</Tab>
        <Tab $w={52}>帮助</Tab>
        <SearchTab><Bulb />操作说明搜索</SearchTab>
        <Share><Person />共享</Share>
      </TabBar>
      <Ribbon>
        <ClipboardGroup />
        <FontGroup />
        <AlignGroup />
        <NumberGroup />
        <StylesGroup />
        <CellsGroup />
        <EditGroup />
        <Collapse><Svg w={10} h={6}><path d="M.5 5.5L5 1l4.5 4.5" stroke="#666" /></Svg></Collapse>
      </Ribbon>
      <FormulaBar>
        <FBox $w={102} $j="space-between" $pr={5}>D4<Caret /></FBox>
        <Grip><span /><span /><span /></Grip>
        <FBox $w={110} $mr={3} $pl={13} $j="space-between" $pr={13}>
          <Svg w={11} h={11}><path d="M1 1l9 9M10 1l-9 9" stroke="#c6c6c6" strokeWidth="1.6" /></Svg>
          <Svg w={13} h={11}><path d="M1 6l4 4 7-9" stroke="#c6c6c6" strokeWidth="1.6" /></Svg>
          <Fx>fx</Fx>
        </FBox>
        <FBox $j="space-between" $pl={11} $pr={1}>
          1
          <Svg w={8} h={6}><path d="M1 1l3 3 3-3" stroke="#555" strokeWidth="1.6" /></Svg>
        </FBox>
      </FormulaBar>
      <SheetArea>
        <GridClip>
          <Sheet />
          <Selection />
        </GridClip>
        <VScroll>
          <VBtn><Svg w={7} h={4}><path d="M0 4h7L3.5 0z" fill="#666" /></Svg></VBtn>
          <VThumb />
          <VGap />
          <VBtn><Caret /></VBtn>
        </VScroll>
      </SheetArea>
      <TabStrip>
        <Nav $w={28} $ml={15}><Svg w={4} h={7}><path d="M4 0v7L0 3.5z" fill={GREEN} /></Svg></Nav>
        <Nav $w={30}><Svg w={4} h={7}><path d="M0 0v7l4-3.5z" fill="#c6c6c6" /></Svg></Nav>
        <Nav $w={27} $dots>...</Nav>
        <SheetTab>Sheet15</SheetTab>
        <Nav $w={82}>
          <Svg w={16} h={16}><circle cx="8" cy="8" r="7.3" stroke="#888" /><path d="M4 8h8M8 4v8" stroke="#777" strokeWidth="1.6" /></Svg>
        </Nav>
        <Grip $w={31} $h={24} $ml={433}><span /><span /><span /></Grip>
        <HScroll>
          <HBtn $line><Svg w={4} h={7}><path d="M4 0v7L0 3.5z" fill="#555" /></Svg></HBtn>
          <HThumb />
          <HGap />
          <HBtn $left><Svg w={4} h={7}><path d="M0 0v7l4-3.5z" fill="#555" /></Svg></HBtn>
        </HScroll>
      </TabStrip>
      <StatusBar>
        <StatusItem $w={47} $pl={6}>计算</StatusItem>
        <StatusItem $w={639} $pl={5}><MacroIcon /></StatusItem>
        <StatusItem $w={66}>平均值: 6</StatusItem>
        <StatusItem $w={61}>计数: 11</StatusItem>
        <StatusItem $w={64}>求和: 66</StatusItem>
        <ViewBtn $w={38} $on><NormalView /></ViewBtn>
        <ViewBtn $w={38}><PageView /></ViewBtn>
        <ViewBtn $w={50}><BreakView /></ViewBtn>
        <Zoom>
          <span>-</span>
          <ZoomTrack><ZoomThumb /></ZoomTrack>
          <span>+</span>
          <ZoomValue>100%</ZoomValue>
        </Zoom>
      </StatusBar>
      <MiniToolbar />
      <ContextMenu />
      <RedBox />
      <Watermark><WaterSwirl><Swirl /></WaterSwirl><span>软件</span><WaterLatin>SOS</WaterLatin></Watermark>
    </Window>
  )
}
